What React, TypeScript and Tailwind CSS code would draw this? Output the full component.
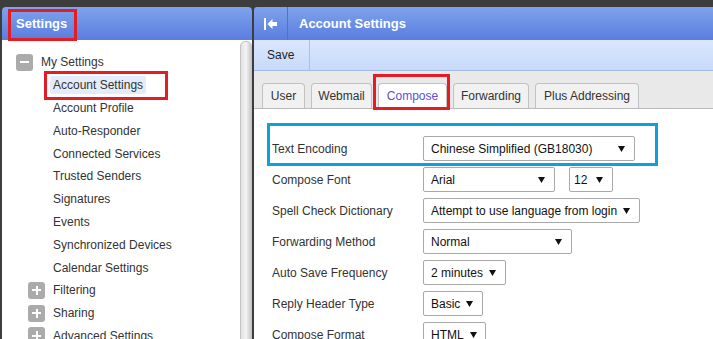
import React from "react";

const FONT = "font-['Liberation_Sans',Arial,sans-serif]";

function Arrow() {
  return (
    <svg width="7" height="6" viewBox="0 0 7 6" className="shrink-0">
      <polygon points="0,0 7,0 3.5,6" fill="#111" />
    </svg>
  );
}

function Sel({ w, text, pl = "pl-[7px]" }: { w: string; text: string; pl?: string }) {
  return (
    <div
      className={`${w} h-[25px] flex items-center border border-[#a9a9a9] rounded-[2px] bg-white ${pl} pr-[9px] text-[12px] text-[#111]`}
    >
      <span className="whitespace-nowrap">{text}</span>
      <span className="ml-auto pl-[6px] flex items-center">
        <Arrow />
      </span>
    </div>
  );
}

function Box({ plus }: { plus?: boolean }) {
  return (
    <div className="relative w-[17px] h-[17px] rounded-[3px] bg-[#ababab] shrink-0">
      <div className="absolute left-[4px] top-[7.5px] w-[9px] h-[2px] bg-white" />
      {plus && <div className="absolute left-[7.5px] top-[4px] w-[2px] h-[9px] bg-white" />}
    </div>
  );
}

const children = [
  "Account Profile",
  "Auto-Responder",
  "Connected Services",
  "Trusted Senders",
  "Signatures",
  "Events",
  "Synchronized Devices",
  "Calendar Settings",
];

const rows: { label: string; sels: { w: string; text: string; pl?: string }[] }[] = [
  { label: "Text Encoding", sels: [{ w: "w-[212px]", text: "Chinese Simplified (GB18030)" }] },
  {
    label: "Compose Font",
    sels: [
      { w: "w-[132px]", text: "Arial" },
      { w: "w-[44px]", text: "12", pl: "pl-[4px]" },
    ],
  },
  { label: "Spell Check Dictionary", sels: [{ w: "w-[217px]", text: "Attempt to use language from login" }] },
  { label: "Forwarding Method", sels: [{ w: "w-[149px]", text: "Normal" }] },
  { label: "Auto Save Frequency", sels: [{ w: "w-[83px]", text: "2 minutes" }] },
  { label: "Reply Header Type", sels: [{ w: "w-[60px]", text: "Basic" }] },
  { label: "Compose Format", sels: [{ w: "w-[63px]", text: "HTML" }] },
];

const tabs: { t: string; w: string }[] = [
  { t: "User", w: "w-[43px]" },
  { t: "Webmail", w: "w-[61px]" },
  { t: "Compose", w: "w-[69px]" },
  { t: "Forwarding", w: "w-[76px]" },
  { t: "Plus Addressing", w: "w-[104px]" },
];

export default function App() {
  return (
    <div className={`${FONT} relative w-[713px] h-[339px] overflow-hidden bg-[#3d3d3d] flex pt-[7px] pl-[2px] gap-[2px]`}>
      {/* Left panel */}
      <div className="w-[250px] shrink-0 flex flex-col rounded-t-[4px] overflow-hidden">
        <div className="h-[33px] shrink-0 flex items-center pl-[14px] bg-linear-to-b from-[#7fa3ec] to-[#5a7ddf] text-white font-bold text-[13px]">
          Settings
        </div>
        <div className="flex-1 flex bg-white">
          <div className="flex-1 pt-[11px] text-[12px] text-[#333]">
            <div className="h-[22.8px] flex items-center pl-[14px] gap-[8px]">
              <Box />
              <span>My Settings</span>
            </div>
            <div className="h-[22.8px] flex items-center pl-[48px]">
              <span className="px-[3px] h-[18px] flex items-center rounded-[2px] bg-[#e4ecfb]">Account Settings</span>
            </div>
            {children.map((c) => (
              <div key={c} className="h-[22.8px] flex items-center pl-[51px]">
                {c}
              </div>
            ))}
            {["Filtering", "Sharing", "Advanced Settings"].map((c) => (
              <div key={c} className="h-[22.8px] flex items-center pl-[26px] gap-[8px]">
                <Box plus />
                <span>{c}</span>
              </div>
            ))}
          </div>
          <div className="w-[12px] shrink-0 pt-[1px] bg-white">
            <div className="h-full rounded-t-[5px] border border-[#c4c4c4] bg-linear-to-r from-[#e2e2e2] via-[#f4f4f4] to-[#c9c9c9]" />
          </div>
        </div>
      </div>

      {/* Right panel */}
      <div className="flex-1 flex flex-col rounded-tl-[3px] overflow-hidden">
        <div className="h-[33px] shrink-0 flex items-center bg-linear-to-b from-[#7fa3ec] to-[#5a7ddf]">
          <div className="w-[34px] h-full flex items-center justify-center border-r border-[#5070d6]">
            <svg width="14" height="12" viewBox="0 0 14 12">
              <rect x="0" y="0" width="2" height="12" fill="#fff" />
              <polygon points="3.5,6 8.5,1 8.5,4 13,4 13,8 8.5,8 8.5,11" fill="#fff" />
            </svg>
          </div>
          <span className="pl-[11px] text-white font-bold text-[13px]">Account Settings</span>
        </div>
        <div className="h-[31px] shrink-0 flex bg-linear-to-b from-[#dae7fd] to-[#c8dafa] border-b border-[#a3bbea]">
          <div className="w-[56px] h-full flex items-center pl-[13px] border-r border-[#a8c0ef] text-[12px] text-[#222]">
            Save
          </div>
        </div>
        <div className="h-[38px] shrink-0 bg-[#e9e9e9] border-b border-[#bcbcbc] flex items-end pl-[8px] gap-[6px]">
          {tabs.map(({ t, w }) => {
            const active = t === "Compose";
            return (
              <div
                key={t}
                className={`${w} flex items-center justify-center whitespace-nowrap rounded-t-[4px] border border-[#c2c2c2] text-[12px] ${
                  active ? "bg-white border-b-white -mb-[1px] h-[26px] text-[#5a4fd8]" : "h-[25px] bg-[#f1f1f1] border-b-0 text-[#333]"
                }`}
              >
                {t}
              </div>
            );
          })}
        </div>
        <div className="flex-1 bg-white pt-[27px] pl-[18px] flex flex-col gap-[6px]">
          {rows.map((r) => (
            <div key={r.label} className="flex items-center">
              <div className="w-[151px] shrink-0 text-[12px] text-[#333]">{r.label}</div>
              <div className="flex gap-[14px]">
                {r.sels.map((s, i) => (
                  <Sel key={i} w={s.w} text={s.text} pl={s.pl} />
                ))}
              </div>
            </div>
          ))}
        </div>
      </div>

      {/* Annotation boxes */}
      <div className="absolute left-[8px] top-[9px] w-[69px] h-[32px] border-[3px] border-[#e51c24]" />
      <div className="absolute left-[44px] top-[71px] w-[124px] h-[29px] border-[3px] border-[#e51c24]" />
      <div className="absolute left-[373px] top-[74px] w-[77px] h-[36px] border-[3px] border-[#e51c24]" />
      <div className="absolute left-[267px] top-[123px] w-[391px] h-[43px] border-[3px] border-[#0aa0e2]" />
    </div>
  );
}
